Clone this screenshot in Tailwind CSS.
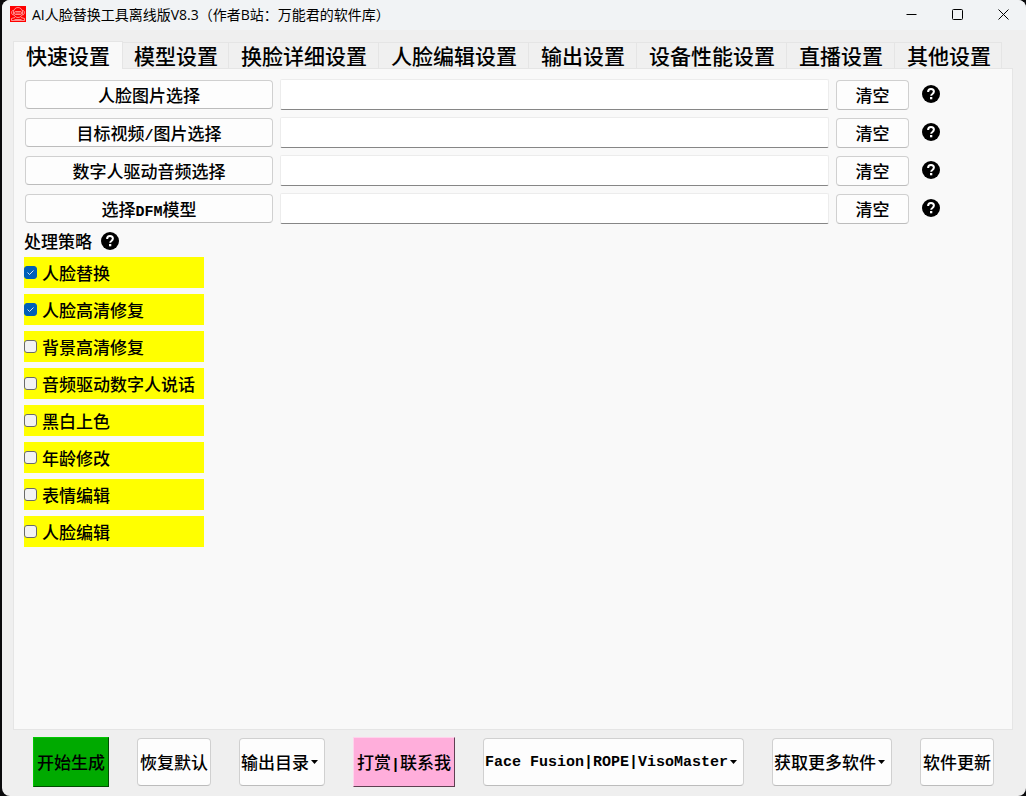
<!DOCTYPE html>
<html lang="zh-CN">

<head>
    <meta charset="UTF-8">
    <meta name="viewport" content="width=device-width, initial-scale=1.0">
    <title>AI人脸替换工具离线版V8.3</title>
    <script src="https://cdn.jsdelivr.net/npm/@tailwindcss/browser@4"></script>
</head>

<body class="bg-[#0a0a0c] pl-[2px] text-black font-['Noto_Sans_CJK_SC',sans-serif]">
    <!-- Shared icon shapes -->
    <svg class="hidden">
        <symbol id="icon-help" viewBox="0 0 18 18">
            <circle cx="9" cy="9" r="9" fill="#000" />
            <path d="M6.100 6.900C6.100 5.100 7.300 4 9 4s2.900 1 2.900 2.600c0 1.200-.7 1.800-1.500 2.400-.8.500-1.200.8-1.200 1.700" fill="none" stroke="#fff" stroke-width="2" />
            <rect x="8" y="12" width="2.300" height="2.300" fill="#fff" />
        </symbol>
        <symbol id="icon-caret" viewBox="0 0 7 4">
            <path d="M0 0h7L3.500 4z" fill="#000" />
        </symbol>
    </svg>

    <div class="min-h-screen flex flex-col rounded-lg overflow-hidden bg-[#efefef]">
        <!-- Title bar -->
        <header class="flex items-center h-[30px] pl-2 bg-[#f1f3f5]">
            <svg class="size-4 mr-1.5 mb-0.5" viewBox="0 0 16 16" fill="none" stroke="#fff" stroke-opacity=".7" stroke-width=".8">
                <rect width="16" height="16" fill="#f00" stroke="none" />
                <rect x="3.500" y="1.500" width="9" height="10" rx="4.500" />
                <path d="M3.500 4.500C1 4 1 9 3.500 9M12.500 4.500c2.500-.5 2.500 4.500 0 4.500" />
                <rect x="4.500" y="5.500" width="7" height="3" rx="1.500" />
                <path d="M6 7h4M5 11.500L1.500 12.500v2h13v-2L11 11.500M4.500 13.500h7" />
            </svg>
            <h1 class="flex-1 text-[14px] leading-5 font-['Open_Sans','Noto_Sans_CJK_SC',sans-serif]">AI人脸替换工具离线版V8.3（作者B站：万能君的软件库）</h1>
            <div class="flex h-full pb-0.5">
                <button class="w-[46px] flex items-center justify-center" aria-label="最小化">
                    <svg class="size-[11px]" viewBox="0 0 11 11" stroke="#000"><path d="M.5 5.500h10" /></svg>
                </button>
                <button class="w-[46px] flex items-center justify-center" aria-label="最大化">
                    <svg class="size-[11px]" viewBox="0 0 11 11" fill="none" stroke="#000"><rect x=".5" y=".5" width="10" height="10" rx="1" /></svg>
                </button>
                <button class="w-[46px] flex items-center justify-center" aria-label="关闭">
                    <svg class="size-[11px]" viewBox="0 0 11 11" stroke="#000"><path d="M.5.5l10 10M10.500.5l-10 10" /></svg>
                </button>
            </div>
        </header>

        <main class="flex-1 flex flex-col pl-[11px] pr-[13px] pt-[11px]">
            <!-- Tabs -->
            <nav class="flex items-end -mb-px text-[21px] leading-[24px] font-medium">
                <button class="relative h-[28px] px-3 pb-0.5 bg-[#f9f9f9] border border-b-0 border-[#e5e5e5]">快速设置</button>
                <button class="h-[27px] pl-[11px] pr-[10px] pb-0.5 bg-[#f0f0f0] border border-l-0 border-[#e5e5e5]">模型设置</button>
                <button class="h-[27px] pl-3 pr-[11px] pb-0.5 bg-[#f0f0f0] border border-l-0 border-[#e5e5e5]">换脸详细设置</button>
                <button class="h-[27px] pl-3 pr-[11px] pb-0.5 bg-[#f0f0f0] border border-l-0 border-[#e5e5e5]">人脸编辑设置</button>
                <button class="h-[27px] pl-3 pr-[11px] pb-0.5 bg-[#f0f0f0] border border-l-0 border-[#e5e5e5]">输出设置</button>
                <button class="h-[27px] pl-3 pr-[11px] pb-0.5 bg-[#f0f0f0] border border-l-0 border-[#e5e5e5]">设备性能设置</button>
                <button class="h-[27px] pl-3 pr-[11px] pb-0.5 bg-[#f0f0f0] border border-l-0 border-[#e5e5e5]">直播设置</button>
                <button class="h-[27px] pl-3 pr-[10px] pb-0.5 bg-[#f0f0f0] border border-l-0 border-[#e5e5e5]">其他设置</button>
            </nav>

            <section class="flex-1 bg-[#f9f9f9] border border-[#e5e5e5] pl-[10px] pt-[10px] text-[17px] leading-6 font-medium">
                <!-- Source files -->
                <div class="flex flex-col gap-[7px] pl-px pr-[72px]">
                    <div class="flex items-center gap-[7px]">
                        <button class="w-[248px] h-[29px] bg-[#fdfdfd] border border-[#d0d0d0] border-b-[#bcbcbc] rounded">人脸图片选择</button>
                        <input type="text" aria-label="人脸图片" class="flex-1 min-w-0 h-[31px] px-2 bg-white border border-[#ececec] border-b-[#868686] rounded-xs">
                        <button class="w-[73px] h-[30px] bg-[#fdfdfd] border border-[#d0d0d0] border-b-[#bcbcbc] rounded">清空</button>
                        <button class="ml-1.5 mb-0.5" aria-label="帮助"><svg class="size-[18px]"><use href="#icon-help" /></svg></button>
                    </div>
                    <div class="flex items-center gap-[7px]">
                        <button class="w-[248px] h-[29px] bg-[#fdfdfd] border border-[#d0d0d0] border-b-[#bcbcbc] rounded">目标视频<span class="text-[15px] leading-none font-bold font-['Liberation_Mono',monospace]">/</span>图片选择</button>
                        <input type="text" aria-label="目标视频/图片" class="flex-1 min-w-0 h-[31px] px-2 bg-white border border-[#ececec] border-b-[#868686] rounded-xs">
                        <button class="w-[73px] h-[30px] bg-[#fdfdfd] border border-[#d0d0d0] border-b-[#bcbcbc] rounded">清空</button>
                        <button class="ml-1.5 mb-0.5" aria-label="帮助"><svg class="size-[18px]"><use href="#icon-help" /></svg></button>
                    </div>
                    <div class="flex items-center gap-[7px]">
                        <button class="w-[248px] h-[29px] bg-[#fdfdfd] border border-[#d0d0d0] border-b-[#bcbcbc] rounded">数字人驱动音频选择</button>
                        <input type="text" aria-label="数字人驱动音频" class="flex-1 min-w-0 h-[31px] px-2 bg-white border border-[#ececec] border-b-[#868686] rounded-xs">
                        <button class="w-[73px] h-[30px] bg-[#fdfdfd] border border-[#d0d0d0] border-b-[#bcbcbc] rounded">清空</button>
                        <button class="ml-1.5 mb-0.5" aria-label="帮助"><svg class="size-[18px]"><use href="#icon-help" /></svg></button>
                    </div>
                    <div class="flex items-center gap-[7px]">
                        <button class="w-[248px] h-[29px] bg-[#fdfdfd] border border-[#d0d0d0] border-b-[#bcbcbc] rounded">选择<span class="text-[15px] leading-none font-bold font-['Liberation_Mono',monospace]">DFM</span>模型</button>
                        <input type="text" aria-label="DFM模型" class="flex-1 min-w-0 h-[31px] px-2 bg-white border border-[#ececec] border-b-[#868686] rounded-xs">
                        <button class="w-[73px] h-[30px] bg-[#fdfdfd] border border-[#d0d0d0] border-b-[#bcbcbc] rounded">清空</button>
                        <button class="ml-1.5 mb-0.5" aria-label="帮助"><svg class="size-[18px]"><use href="#icon-help" /></svg></button>
                    </div>
                </div>

                <!-- Processing strategy -->
                <div class="flex items-center gap-[9px] h-[33px]">
                    <h2>处理策略</h2>
                    <button aria-label="帮助"><svg class="size-[18px]"><use href="#icon-help" /></svg></button>
                </div>
                <div class="flex flex-col gap-1.5 w-[180px]">
                    <label class="flex items-center gap-[5px] h-[31px] bg-[#ffff00]">
                        <span class="relative flex">
                            <input type="checkbox" checked class="appearance-none size-[13px] rounded-[3px] border border-[#6a6a6a] bg-[#f3f3f3] checked:bg-[#005fb8] checked:border-[#005fb8]">
                            <svg class="absolute inset-0 size-[13px]" viewBox="0 0 13 13" fill="none" stroke="#cfe3f5"><path d="M3.500 6.500l2 2 4-4" /></svg>
                        </span>
                        人脸替换
                    </label>
                    <label class="flex items-center gap-[5px] h-[31px] bg-[#ffff00]">
                        <span class="relative flex">
                            <input type="checkbox" checked class="appearance-none size-[13px] rounded-[3px] border border-[#6a6a6a] bg-[#f3f3f3] checked:bg-[#005fb8] checked:border-[#005fb8]">
                            <svg class="absolute inset-0 size-[13px]" viewBox="0 0 13 13" fill="none" stroke="#cfe3f5"><path d="M3.500 6.500l2 2 4-4" /></svg>
                        </span>
                        人脸高清修复
                    </label>
                    <label class="flex items-center gap-[5px] h-[31px] bg-[#ffff00]">
                        <input type="checkbox" class="appearance-none size-[13px] rounded-[3px] border border-[#6a6a6a] bg-[#f3f3f3] checked:bg-[#005fb8]">
                        背景高清修复
                    </label>
                    <label class="flex items-center gap-[5px] h-[31px] bg-[#ffff00]">
                        <input type="checkbox" class="appearance-none size-[13px] rounded-[3px] border border-[#6a6a6a] bg-[#f3f3f3] checked:bg-[#005fb8]">
                        音频驱动数字人说话
                    </label>
                    <label class="flex items-center gap-[5px] h-[31px] bg-[#ffff00]">
                        <input type="checkbox" class="appearance-none size-[13px] rounded-[3px] border border-[#6a6a6a] bg-[#f3f3f3] checked:bg-[#005fb8]">
                        黑白上色
                    </label>
                    <label class="flex items-center gap-[5px] h-[31px] bg-[#ffff00]">
                        <input type="checkbox" class="appearance-none size-[13px] rounded-[3px] border border-[#6a6a6a] bg-[#f3f3f3] checked:bg-[#005fb8]">
                        年龄修改
                    </label>
                    <label class="flex items-center gap-[5px] h-[31px] bg-[#ffff00]">
                        <input type="checkbox" class="appearance-none size-[13px] rounded-[3px] border border-[#6a6a6a] bg-[#f3f3f3] checked:bg-[#005fb8]">
                        表情编辑
                    </label>
                    <label class="flex items-center gap-[5px] h-[31px] bg-[#ffff00]">
                        <input type="checkbox" class="appearance-none size-[13px] rounded-[3px] border border-[#6a6a6a] bg-[#f3f3f3] checked:bg-[#005fb8]">
                        人脸编辑
                    </label>
                </div>
            </section>
        </main>

        <!-- Bottom actions -->
        <footer class="flex items-center justify-between h-[66px] pl-[31px] pr-8 pb-0.5 text-[17px] leading-6 font-medium whitespace-nowrap">
            <button class="h-[50px] px-[3px] bg-[#00aa00] border border-t-[#00c800] border-l-[#00c800] border-r-[#004d00] border-b-[#004d00]">开始生成</button>
            <button class="h-12 px-[2px] bg-[#fdfdfd] border border-[#d0d0d0] border-b-[#bcbcbc] rounded">恢复默认</button>
            <button class="flex items-center gap-[2px] h-12 pl-px pr-[6px] bg-[#fdfdfd] border border-[#d0d0d0] border-b-[#bcbcbc] rounded">
                输出目录
                <svg class="w-[7px] h-1"><use href="#icon-caret" /></svg>
            </button>
            <button class="h-[50px] px-[3px] bg-[#ffaedb] border border-t-[#ffd3ec] border-l-[#ffd3ec] border-r-[#5e4051] border-b-[#5e4051]">打赏<span class="text-[15px] leading-none font-bold font-['Liberation_Mono',monospace]">|</span>联系我</button>
            <button class="flex items-center gap-[2px] h-12 pl-px pr-[6px] bg-[#fdfdfd] border border-[#d0d0d0] border-b-[#bcbcbc] rounded">
                <span class="pt-0.5 text-[15px] font-bold font-['Liberation_Mono',monospace]">Face Fusion|ROPE|VisoMaster</span>
                <svg class="w-[7px] h-1"><use href="#icon-caret" /></svg>
            </button>
            <button class="flex items-center gap-[2px] h-12 pl-px pr-[6px] bg-[#fdfdfd] border border-[#d0d0d0] border-b-[#bcbcbc] rounded">
                获取更多软件
                <svg class="w-[7px] h-1"><use href="#icon-caret" /></svg>
            </button>
            <button class="h-12 px-[2px] bg-[#fdfdfd] border border-[#d0d0d0] border-b-[#bcbcbc] rounded">软件更新</button>
        </footer>
    </div>
</body>

</html>
